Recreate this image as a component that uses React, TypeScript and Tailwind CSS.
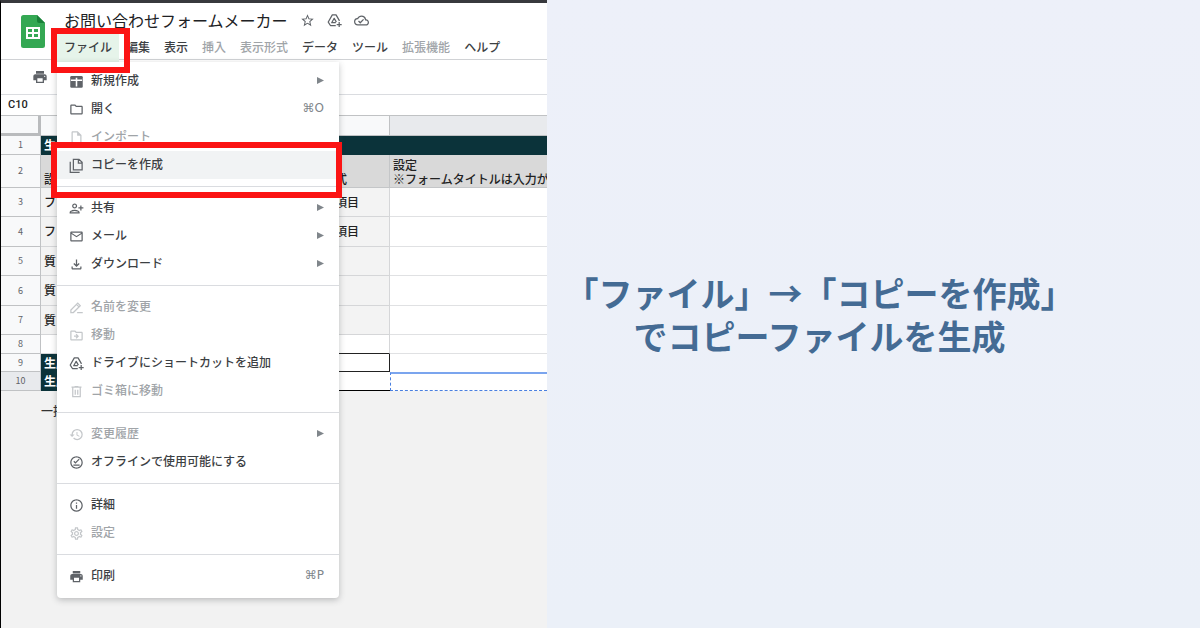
import type { ReactNode } from 'react';
import {
  MdHistory,
  MdInfoOutline,
  MdMailOutline,
  MdOutlineCloudDone,
  MdOutlineDriveFileMove,
  MdOutlineFileDownload,
  MdOutlineFolder,
  MdOutlineInsertDriveFile,
  MdOutlineOfflinePin,
  MdOutlineSettings,
  MdPersonAddAlt,
  MdPrint,
  MdStarOutline,
} from 'react-icons/md';

interface MenuEntry {
  label: string;
  icon: ReactNode;
  shortcut?: string;
  submenu?: boolean;
  disabled?: boolean;
  highlighted?: boolean;
}

interface SheetRow {
  height: string;
  label?: string;
  kind?: string;
  note?: ReactNode;
  style: 'title' | 'heading' | 'item' | 'blank' | 'result' | 'selected';
}

function NewSheetIcon() {
  return (
    <svg viewBox="0 0 24 24" className="size-[15px]">
      <rect x="2" y="3" width="20" height="19" rx="2" fill="currentColor" />
      <path d="M3 10h18M12 6v14" stroke="#fff" strokeWidth="2.500" />
    </svg>
  );
}

function CopyIcon() {
  return (
    <svg viewBox="0 0 24 24" fill="none" stroke="currentColor" strokeWidth="2" className="size-[15px]">
      <path d="M7 2h9l5 5v12H7zM15 2v6h6M2 6v17h15" />
    </svg>
  );
}

function RenameIcon() {
  return (
    <svg viewBox="0 0 24 24" fill="none" stroke="currentColor" strokeWidth="2" className="size-[15px]">
      <path d="M3 20v-4L14 5l4 4L7 20zM12 7l4 4M13 20h9" />
    </svg>
  );
}

function DriveShortcutIcon() {
  return (
    <svg viewBox="0 0 24 24" fill="none" stroke="currentColor" strokeWidth="2" strokeLinejoin="round" className="size-[15px]">
      <path d="M14 20H5.500L2 14.500 8.500 3h6L20 12.500" />
      <path d="M14 15.500H7.500L11.500 8.500l3.500 6" />
      <path d="M19.500 14.500v8M15.500 18.500h8" />
    </svg>
  );
}

function TrashIcon() {
  return (
    <svg viewBox="0 0 24 24" fill="none" stroke="currentColor" strokeWidth="2" className="size-[15px]">
      <path d="M4 5h16M9 4h6M6 6v14h12V6M10 9v8M14 9v8" />
    </svg>
  );
}

function SheetsLogo() {
  return (
    <svg viewBox="0 0 24 33" className="h-[33px] w-6">
      <path d="M2.500 0H16l8 8v22.500a2.500 2.500 0 0 1-2.500 2.500h-19A2.500 2.500 0 0 1 0 30.500v-28A2.500 2.500 0 0 1 2.500 0z" fill="#34a853" />
      <path d="M16 0l8 8h-6a2 2 0 0 1-2-2z" fill="#188038" />
      <path d="M5 12h14v12H5zM7 14v3h4v-3zm6 0v3h4v-3zm-6 5v3h4v-3zm6 0v3h4v-3z" fill="#fff" fillRule="evenodd" />
    </svg>
  );
}

const MENU_BAR = [
  { label: '編集' },
  { label: '表示' },
  { label: '挿入', disabled: true },
  { label: '表示形式', disabled: true },
  { label: 'データ' },
  { label: 'ツール' },
  { label: '拡張機能', disabled: true },
  { label: 'ヘルプ' },
];

const FILE_MENU: MenuEntry[][] = [
  [
    { label: '新規作成', icon: <NewSheetIcon />, submenu: true },
    { label: '開く', icon: <MdOutlineFolder />, shortcut: '⌘O' },
    { label: 'インポート', icon: <MdOutlineInsertDriveFile />, disabled: true },
    { label: 'コピーを作成', icon: <CopyIcon />, highlighted: true },
  ],
  [
    { label: '共有', icon: <MdPersonAddAlt />, submenu: true },
    { label: 'メール', icon: <MdMailOutline />, submenu: true },
    { label: 'ダウンロード', icon: <MdOutlineFileDownload />, submenu: true },
  ],
  [
    { label: '名前を変更', icon: <RenameIcon />, disabled: true },
    { label: '移動', icon: <MdOutlineDriveFileMove />, disabled: true },
    { label: 'ドライブにショートカットを追加', icon: <DriveShortcutIcon /> },
    { label: 'ゴミ箱に移動', icon: <TrashIcon />, disabled: true },
  ],
  [
    { label: '変更履歴', icon: <MdHistory />, submenu: true, disabled: true },
    { label: 'オフラインで使用可能にする', icon: <MdOutlineOfflinePin /> },
  ],
  [
    { label: '詳細', icon: <MdInfoOutline /> },
    { label: '設定', icon: <MdOutlineSettings />, disabled: true },
  ],
  [{ label: '印刷', icon: <MdPrint />, shortcut: '⌘P' }],
];

const ROWS: SheetRow[] = [
  { height: 'h-[19px]', label: '生', style: 'title' },
  {
    height: 'h-[33px]',
    label: '設',
    kind: '式',
    note: (
      <>
        設定
        <br />
        ※フォームタイトルは入力が必須
      </>
    ),
    style: 'heading',
  },
  { height: 'h-[29px]', label: 'フ', kind: '項目', style: 'item' },
  { height: 'h-[30px]', label: 'フ', kind: '項目', style: 'item' },
  { height: 'h-[29px]', label: '質', style: 'item' },
  { height: 'h-[30px]', label: '質', style: 'item' },
  { height: 'h-[29px]', label: '質', style: 'item' },
  { height: 'h-[19px]', style: 'blank' },
  { height: 'h-[18px]', label: '生成', style: 'result' },
  { height: 'h-[19px]', label: '生成', style: 'selected' },
];

const LABEL_STYLE: Record<SheetRow['style'], string> = {
  title: 'bg-[#0b333a] text-white font-bold',
  heading: 'bg-[#d9d9d9] align-bottom border-b border-[#c4c6c8]',
  item: 'bg-[#f3f3f3] border-b border-[#d5d6d8]',
  blank: 'bg-white border-b border-[#d5d6d8]',
  result: 'bg-[#0b333a] text-white font-bold',
  selected: 'bg-[#0b333a] text-white font-bold',
};

const KIND_STYLE: Record<SheetRow['style'], string> = {
  title: 'bg-[#0b333a]',
  heading: 'bg-[#d9d9d9] align-bottom border-b border-r border-[#c4c6c8]',
  item: 'bg-[#f3f3f3] border-b border-r border-[#d5d6d8]',
  blank: 'bg-white border-b border-b-[#222] border-r border-r-[#d5d6d8]',
  result: 'bg-white border-b border-r border-[#222]',
  selected: 'bg-white border-b border-b-black',
};

const NOTE_STYLE: Record<SheetRow['style'], string> = {
  title: 'bg-[#0b333a]',
  heading: 'bg-[#d9d9d9] align-bottom border-b border-[#c4c6c8]',
  item: 'bg-white border-b border-[#e0e1e3]',
  blank: 'bg-white border-b border-[#e0e1e3]',
  result: 'bg-white',
  selected: 'bg-white border border-r-0 border-dashed border-[#4a80e0] border-t-2 [border-top-style:solid] border-t-[#7ba5ee]',
};

function MenuItem({ entry }: { entry: MenuEntry }) {
  return (
    <li className="relative">
      <button
        type="button"
        disabled={entry.disabled}
        className={`flex h-7 w-full items-center pr-[15px] pb-0.5 pl-3 text-left ${entry.highlighted ? 'bg-[#f1f3f4]' : ''} ${entry.disabled ? 'text-[#a0a4a8]' : 'text-[#3c4043]'}`}
      >
        <span className={`mr-[7px] pt-[3px] text-[15px] ${entry.disabled ? 'text-[#c4c7ca]' : 'text-[#5f6368]'}`}>{entry.icon}</span>
        <span>{entry.label}</span>
        {entry.shortcut && (
          <span className="ml-auto font-['DejaVu_Sans','Liberation_Sans',sans-serif] text-xs text-[#80868b]">{entry.shortcut}</span>
        )}
        {entry.submenu && (
          <svg viewBox="0 0 6 6" className="ml-auto size-[7px]" fill="#80868b">
            <path d="M0 0l6 3-6 3z" />
          </svg>
        )}
      </button>
      {entry.highlighted && (
        <div className="pointer-events-none absolute -top-[9px] -right-[3px] -bottom-[19px] -left-[6px] z-10 border-6 border-[#fb1414]" />
      )}
    </li>
  );
}

function FileMenu() {
  return (
    <div className="absolute top-full left-0 z-10 w-[282px] rounded-b-[4px] bg-white pt-[5px] pb-2 shadow-[0_2px_6px_rgba(60,64,67,0.3)]">
      {FILE_MENU.map((group, idx) => (
        <ul key={idx} className={idx > 0 ? 'mt-[7px] border-t border-[#dadce0] pt-[7px]' : ''}>
          {group.map((entry) => (
            <MenuItem key={entry.label} entry={entry} />
          ))}
        </ul>
      ))}
    </div>
  );
}

function Header() {
  return (
    <header className="flex h-[57px] border-b border-[#d0d2d5] pl-5">
      <div className="pt-3">
        <SheetsLogo />
      </div>
      <div className="ml-3">
        <div className="flex h-[31px] items-center gap-3 pt-[3px] pl-[7px] text-[#5f6368]">
          <h1 className="text-base font-normal whitespace-nowrap text-[#202124]">お問い合わせフォームメーカー</h1>
          <MdStarOutline className="size-[15px]" />
          <DriveShortcutIcon />
          <MdOutlineCloudDone className="size-[15px]" />
        </div>
        <nav className="flex h-7 text-[#3c4043]">
          <div className="relative">
            <button type="button" className="h-7 bg-[#e6f4ea] px-[7px] pb-0.5 whitespace-nowrap">
              ファイル
            </button>
            <FileMenu />
            <div className="pointer-events-none absolute -top-[6px] -right-[11px] -bottom-[11px] -left-[6px] z-20 border-6 border-[#fb1414]" />
          </div>
          {MENU_BAR.map((item) => (
            <button
              key={item.label}
              type="button"
              disabled={item.disabled}
              className={`h-7 px-[7px] pb-0.5 whitespace-nowrap ${item.disabled ? 'text-[#a0a4a8]' : ''}`}
            >
              {item.label}
            </button>
          ))}
        </nav>
      </div>
    </header>
  );
}

function Sheet() {
  return (
    <table className="w-full table-fixed border-separate border-spacing-0 leading-[14px] text-[#222]">
      <colgroup>
        <col className="w-10" />
        <col className="w-[291px]" />
        <col className="w-[58px]" />
        <col />
      </colgroup>
      <thead>
        <tr>
          <th className="h-5 border-r-3 border-b-3 border-[#b9bbbd] bg-[#f8f9fa] p-0" />
          <th className="border-b border-[#c0c2c4] bg-[#f8f9fa] p-0" />
          <th className="border-r border-b border-[#c0c2c4] bg-[#f8f9fa] p-0" />
          <th className="border-b border-[#c0c2c4] bg-[#e8eaed] p-0" />
        </tr>
      </thead>
      <tbody>
        {ROWS.map((row, idx) => (
          <tr key={idx}>
            <th
              className={`${row.height} border-r border-b border-[#c0c2c4] p-0 text-[9px] font-normal text-[#5f6368] ${row.style === 'selected' ? 'bg-[#e8eaed]' : 'bg-[#f8f9fa]'}`}
            >
              {idx + 1}
            </th>
            <td className={`overflow-hidden px-[3px] pt-0 pb-px whitespace-nowrap ${LABEL_STYLE[row.style]}`}>{row.label}</td>
            <td className={`overflow-hidden px-[3px] pt-0 pb-px whitespace-nowrap ${KIND_STYLE[row.style]}`}>{row.kind}</td>
            <td className={`overflow-hidden px-[3px] pt-0 pb-px whitespace-nowrap ${NOTE_STYLE[row.style]}`}>{row.note}</td>
          </tr>
        ))}
      </tbody>
    </table>
  );
}

export default function App() {
  return (
    <main className="flex min-h-screen bg-[#edf1f9] font-['Noto_Sans_CJK_JP',sans-serif]">
      <section className="w-[45.6%] shrink-0 overflow-hidden border-t-3 border-l border-t-[#38393d] border-l-black bg-[#f2f2f2] text-xs font-medium">
        <div className="bg-white">
          <Header />
          <div className="flex h-[35px] items-center border-b border-[#dadce0] pl-[31px]">
            <button type="button" aria-label="印刷" className="text-[#5f6368]">
              <MdPrint className="size-4" />
            </button>
          </div>
          <div className="flex h-[21px] items-center border-b border-[#c0c2c4] pl-[7px]">
            <span className="font-['Roboto',sans-serif] text-[11px] text-[#222]">C10</span>
          </div>
        </div>
        <Sheet />
        <p className="pt-3 pl-10 text-[#333]">一括</p>
      </section>

      <section className="flex flex-1 items-center justify-center bg-linear-to-b from-[#edf0f9] to-[#ebf0f8] pr-[9%]">
        <p className="text-center text-[34px] leading-[43px] font-bold whitespace-nowrap text-[#446b94]">
          「ファイル」→「コピーを作成」
          <br />
          でコピーファイルを生成
        </p>
      </section>
    </main>
  );
}
